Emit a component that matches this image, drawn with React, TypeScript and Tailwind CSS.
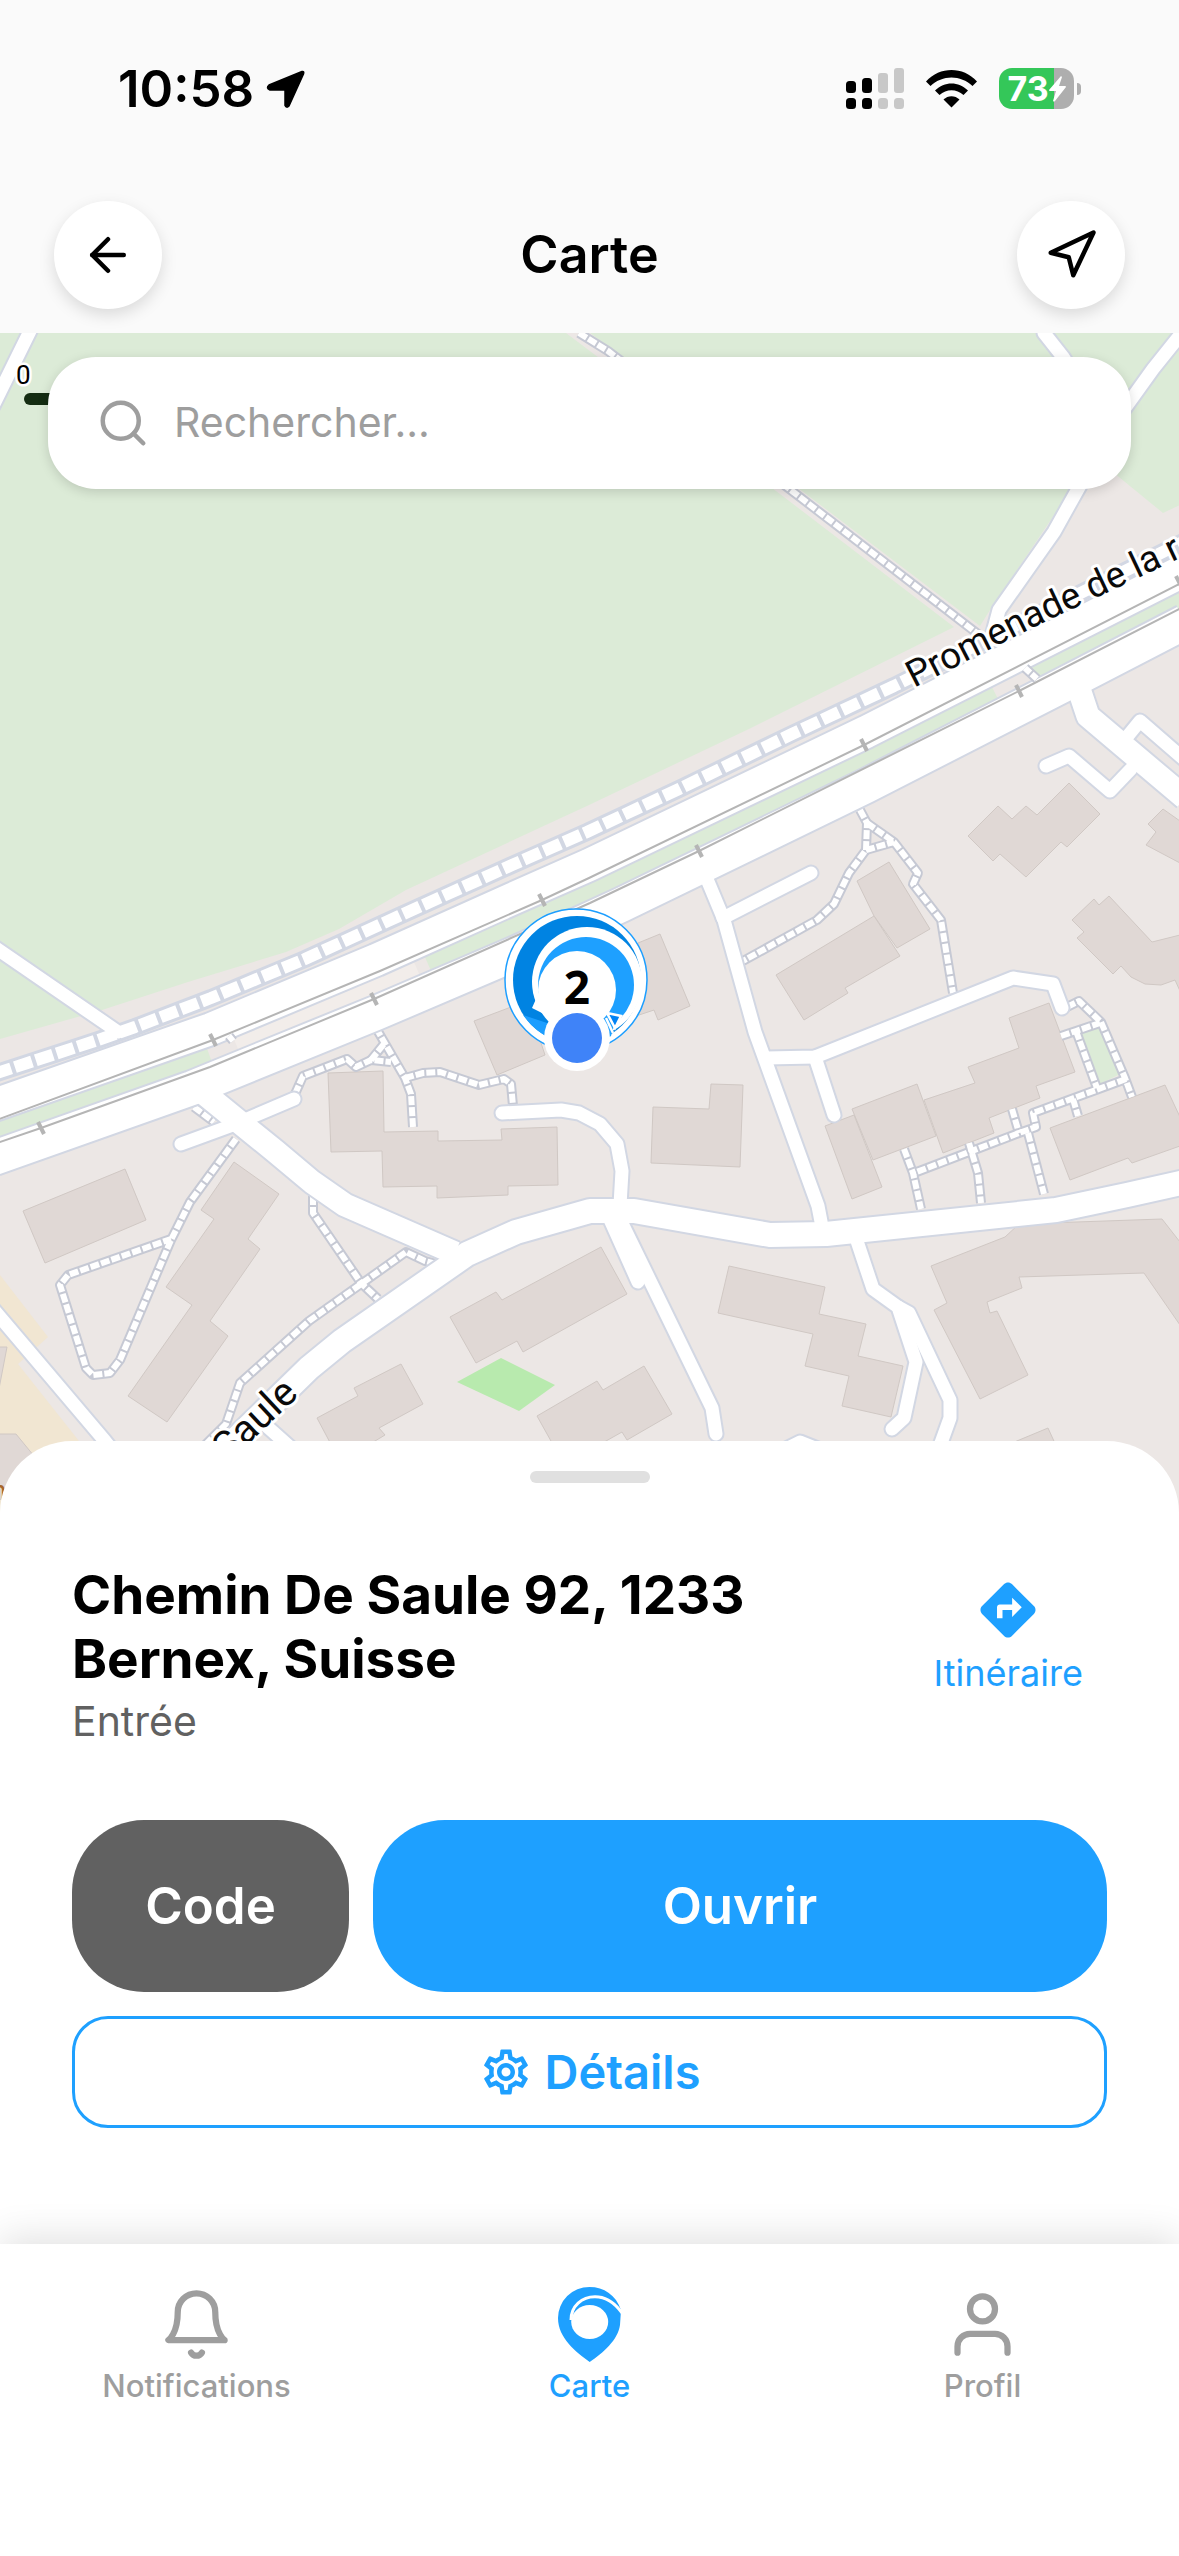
import { useState } from "react";
import { ArrowLeft, Navigation, Search } from "lucide-react";
import { FiBell, FiUser } from "react-icons/fi";
import { MdDirections, MdOutlineSettings } from "react-icons/md";

/* ---------- Map data ---------- */
const buildings = [
  "23,1211 125,1169 146,1220 45,1263",
  "234,1162 279,1194 248,1239 260,1249 210,1321 228,1336 167,1422 128,1396 192,1305 166,1287 214,1219 201,1210",
  "328,1073 383,1071 384,1132 438,1131 438,1141 502,1140 501,1129 557,1127 558,1185 508,1186 508,1195 437,1198 437,1186 383,1187 382,1151 331,1152",
  "474,1021 527,1001 545,1055 497,1075",
  "638,943 660,934 690,1006 658,1020 654,1010 627,1019",
  "711,1084 743,1085 740,1167 651,1163 653,1107 709,1109",
  "857,881 889,862 930,929 897,948 874,916",
  "874,916 900,956 845,988 848,993 804,1020 776,975",
  "1069,783 1100,814 1067,847 1061,842 1026,877 1000,854 993,861 968,836 998,806 1012,819 1026,806 1037,815",
  "1163,809 1180,821 1180,863 1146,845 1156,832 1148,824",
  "1094,899 1099,905 1109,896 1152,942 1180,935 1180,991 1175,980 1161,985 1145,984 1131,977 1121,966 1113,974 1077,938 1084,932 1072,920",
  "1009,1018 1049,1003 1075,1072 1036,1086 1040,1098 989,1118 994,1133 943,1153 924,1100 975,1083 968,1067 1019,1048",
  "852,1109 917,1084 936,1136 873,1160",
  "825,1126 854,1115 882,1187 852,1199",
  "1050,1128 1165,1085 1180,1117 1180,1146 1132,1163 1128,1158 1070,1180",
  "729,1266 825,1287 819,1314 866,1324 858,1356 903,1366 891,1417 842,1406 849,1376 805,1366 813,1334 718,1313",
  "931,1266 1005,1237 1019,1224 1162,1219 1180,1242 1180,1325 1144,1273 1019,1277 1022,1288 987,1302 990,1313 997,1311 1028,1375 980,1399 934,1310 947,1303",
  "450,1317 496,1292 502,1300 601,1247 627,1294 523,1352 517,1341 476,1363",
  "317,1418 358,1396 354,1388 401,1364 423,1404 379,1428 385,1435 360,1450 334,1450",
  "537,1416 597,1381 603,1390 644,1366 672,1414 627,1440 622,1432 590,1450 556,1450",
  "1000,1448 1048,1428 1058,1450",
  "-2,1347 7,1347 -2,1394",
  "-2,1434 16,1434 34,1456 0,1500",
];

const footpaths = [
  "M579 333 608 351 792 491 978 634",
  "M860 810 867 823 866 850 849 873 834 904 817 920 743 961",
  "M867 823 894 842 918 873 913 884 941 920 953 993",
  "M866 850 894 842",
  "M376 1028 405 1078 411 1094 413 1127",
  "M295 1094 303 1076 347 1059 356 1067 371 1060 391 1062",
  "M371 1060 384 1044",
  "M405 1078 423 1073 440 1072 479 1085 504 1079 511 1084 513 1106",
  "M236 1139 190 1202 171 1240 120 1360 110 1373 93 1375 86 1368 60 1285 68 1275 171 1239",
  "M313 1196 313 1213 361 1283 378 1299",
  "M436 1264 425 1261 406 1252 309 1321 240 1383 226 1424 200 1450",
  "M194 1107 214 1122",
  "M1067 1007 1079 1001 1101 1022 1125 1078 1132 1097",
  "M1061 1036 1076 1031 1100 1023",
  "M1076 1031 1097 1088",
  "M1126 1079 1033 1113 1036 1127 1019 1133 914 1173",
  "M1073 1099 1078 1116",
  "M1012 1109 1019 1133",
  "M1028 1133 1044 1194",
  "M969 1143 972 1153 978 1173 981 1203",
  "M904 1149 913 1173 921 1209",
];

const streets = [
  "M31 329 0 392 -8 408",
  "M1044 333 1063 357 1090 400",
  "M1185 329 1153 369 1120 415 1078 489 1054 532 999 610 991 640",
  "M-10 944 118 1032",
  "M181 1144 233 1125 294 1099",
  "M502 1113 561 1110 579 1113 600 1124 617 1144 622 1171 620 1205",
  "M704 872 724 920 755 1032 818 1206 823 1232",
  "M723 918 811 873",
  "M766 1058 815 1057 1013 978 1053 984 1062 1008",
  "M815 1057 834 1115",
  "M608 1215 638 1282",
  "M618 1215 712 1408 716 1434",
  "M854 1232 873 1289 898 1307 916 1362 904 1418 892 1429",
  "M898 1307 909 1313 950 1400 950 1418 941 1443 930 1465",
  "M780 1452 800 1442 840 1458",
  "M262 1422 300 1456",
  "M-6 1310 105 1441 128 1470",
  "M1122 743 1140 721 1185 760",
  "M1046 766 1069 756 1110 791 1131 769",
];

const avenues = [
  "M200 1090 238 1121 275 1151 312 1182 345 1205 455 1253",
  "M1076 680 1088 716 1185 798",
];

const mainStreet =
  "M180 1492 226 1449 309 1368 342 1341 467 1254 516 1232 590 1211 634 1211 770 1235 826 1234 1056 1210 1127 1195 1185 1182";

const promenade =
  "M-6 1074 98 1040 135 1027 211 998 305 959 399 916 512 865 587 832 679 789 792 734 894 686 1185 541";
const upperLane =
  "M-6 1105 211 1029 376 960 512 899 589 865 866 732 1185 570";
const lowerLane =
  "M-6 1158 192 1088 376 1013 512 955 621 905 866 786 1067 683 1185 622";

const railTicks = [
  [213, 1040],
  [542, 900],
  [864, 745],
  [41, 1128],
  [374, 999],
  [699, 851],
  [1019, 691],
  [1179, 582],
];

function MapView() {
  return (
    <svg
      className="absolute inset-0 h-full w-full bg-[#ece7e5]"
      viewBox="0 333 1179 1911"
      preserveAspectRatio="xMidYMin slice"
      role="img"
      aria-label="Plan du quartier"
    >
      {/* fields and plots */}
      <g fill="#dcebd7">
        <path d="M0 333H566L780 494 954 627 751 728 589 805 406 890 339 929 286 952 188 982 102 1010 0 1039Z" />
        <path d="M590 333 802 491 980 626 990 610 1044 530 1073 487 1090 452 1114 473 1163 513 1180 505V333Z" />
        <path d="M1081 1033 1099 1027 1120 1074 1100 1084Z" />
      </g>
      <path d="M457 1382 501 1358 555 1385 519 1411Z" fill="#b8eaae" />
      <path d="M0 1275 48 1337 18 1364 79 1441 90 1540H0Z" fill="#f1e6d2" />

      {/* central reservation */}
      <g fill="none" strokeWidth="24">
        <path d="M-6 1132 209 1054" stroke="#dcebd7" />
        <path d="M236 1044 376 987 417 969" stroke="#f2edea" />
        <path d="M428 964 512 927 589 893 866 759 995 693" stroke="#dcebd7" />
        <path d="M1034 672 1067 656 1185 596" stroke="#dcebd7" />
      </g>

      <g fill="#e0d8d5" stroke="#d0c8c4" strokeWidth="1">
        {buildings.map((points) => (
          <polygon key={points} points={points} />
        ))}
      </g>

      {/* footpaths */}
      <g fill="none" strokeLinejoin="round">
        <g stroke="#c6c9d4" strokeWidth="10">
          {footpaths.map((d) => (
            <path key={d} d={d} />
          ))}
        </g>
        <path d="M237 1134 305 1186" stroke="#c6c9d4" strokeWidth="5" />
        <g stroke="#fff" strokeWidth="6" strokeDasharray="9 2">
          {footpaths.map((d) => (
            <path key={d} d={d} />
          ))}
        </g>
      </g>

      {/* roads, casing first */}
      <g fill="none" strokeLinejoin="round">
        <g stroke="#d2d7e3">
          <path d={promenade} strokeWidth="18" />
          <g strokeWidth="17" strokeLinecap="round">
            {streets.map((d) => (
              <path key={d} d={d} />
            ))}
          </g>
          {avenues.map((d) => (
            <path key={d} d={d} strokeWidth="27" />
          ))}
          <path d={mainStreet} strokeWidth="28" />
          <path d={upperLane} strokeWidth="36" />
          <path d={lowerLane} strokeWidth="38" />
        </g>
        <g stroke="#fff">
          <path d={promenade} strokeWidth="12" strokeDasharray="18 4" />
          <g strokeWidth="13" strokeLinecap="round">
            {streets.map((d) => (
              <path key={d} d={d} />
            ))}
          </g>
          {avenues.map((d) => (
            <path key={d} d={d} strokeWidth="23" />
          ))}
          <path d={mainStreet} strokeWidth="24" />
          <path d={upperLane} strokeWidth="32" />
          <path d={lowerLane} strokeWidth="34" />
        </g>
      </g>

      {/* crossing between the two lanes */}
      <g fill="none" strokeLinejoin="round">
        <path d="M1025 668 1037 679M229 1036 233 1041" stroke="#c6c9d4" strokeWidth="10" />
        <path d="M1025 668 1037 679M229 1036 233 1041" stroke="#fff" strokeWidth="6" strokeDasharray="7 2" />
      </g>

      {/* tram tracks */}
      <g fill="none" stroke="#b5b5b5" strokeWidth="2">
        <path d="M-6 1121 213 1040 380 971 542 900 589 878 864 745 1185 581" />
        <path d="M-6 1144 41 1128 210 1067 374 999 590 903 699 851 1019 691 1185 606" />
        {railTicks.map(([x, y]) => (
          <path key={x} d={`M${x - 3} ${y - 6}l6 12`} strokeWidth="4" />
        ))}
      </g>

      {/* street names */}
      <defs>
        <path id="promenade-label" d="M914 688 1030 629 1240 530" />
        <path id="saule-label" d="M228 1463 302 1393 340 1357" />
      </defs>
      <g
        className="font-[Roboto,sans-serif]"
        fill="#0a0a0a"
        stroke="#fff"
        strokeWidth="6"
        strokeLinejoin="round"
        paintOrder="stroke"
      >
        <text fontSize="37">
          <textPath href="#promenade-label">Promenade de la r</textPath>
        </text>
        <text fontSize="40">
          <textPath href="#saule-label">Saule</textPath>
        </text>
      </g>
      <text x="-9" y="1500" fontSize="28" fill="#a8672a" className="font-[Roboto,sans-serif]">
        n
      </text>

      {/* scale bar */}
      <rect x="24" y="393" width="120" height="12" rx="6" fill="#142c12" />
      <text
        x="16"
        y="384"
        fontSize="26"
        stroke="#fff"
        strokeWidth="5"
        paintOrder="stroke"
        className="font-[Roboto,sans-serif]"
      >
        0
      </text>

      <ClusterMarker />
    </svg>
  );
}

function ClusterMarker() {
  return (
    <g>
      <circle cx="576" cy="980" r="71" fill="#fff" stroke="#1c9eff" strokeWidth="1.5" />
      <circle cx="577" cy="980" r="64" fill="#0083e2" />
      <path d="M523 1015Q535 1032 552 1039L562 1028Z" fill="#1c9eff" />
      <circle cx="587" cy="982" r="55" fill="#fff" />
      <circle cx="586" cy="985" r="48" fill="#1ea0ff" />
      <path d="M602 1020 618 1012 611 1036 605 1040Z" fill="#1ea0ff" />
      <circle cx="577" cy="990" r="39" fill="#fff" />
      <path d="M540 990Q538 1003 544 1014L532 1008Z" fill="#fff" />
      <path d="M607 1013 621 1016 615 1028Z" fill="#0083f5" stroke="#fff" strokeWidth="2.5" />
      <path d="M606 1018 613 1033" stroke="#fff" strokeWidth="2.5" />
      <text
        x="577"
        y="1004"
        textAnchor="middle"
        fontSize="46"
        className="font-['Noto_Sans',sans-serif] font-bold"
      >
        2
      </text>
      <circle cx="577" cy="1038" r="33" fill="#fff" />
      <circle cx="577" cy="1038" r="25" fill="#3f83f8" />
    </g>
  );
}

/* ---------- Status bar ---------- */
function StatusBar() {
  return (
    <div className="flex h-[177px] items-center justify-between pr-[98px] pl-[118px]">
      <div className="flex items-center gap-3">
        <span className="text-[51px] leading-none font-semibold">10:58</span>
        <svg width="40" height="40" viewBox="0 0 40 40" aria-hidden="true">
          <path
            d="M3 16 36 2.500Q38.500 2 37.500 5L23 37Q20.500 39.500 19 36.500V21H4Q-.5 19 3 16Z"
            stroke="#000"
            strokeWidth="1.500"
            strokeLinejoin="round"
          />
        </svg>
      </div>

      <div className="flex items-center gap-[22px]">
        <svg width="58" height="42" viewBox="0 0 58 42" aria-hidden="true">
          <rect y="13" width="10" height="12" rx="3.500" />
          <rect x="16" y="10" width="10" height="15" rx="3.500" />
          <rect y="30" width="10" height="11" rx="3.500" />
          <rect x="16" y="30" width="10" height="11" rx="3.500" />
          <g fill="#c8c8c8">
            <rect x="32" y="5" width="10" height="20" rx="3" />
            <rect x="48" width="10" height="25" rx="3" />
            <rect x="32" y="30" width="10" height="11" rx="3.500" />
            <rect x="48" y="30" width="10" height="11" rx="3.500" />
          </g>
        </svg>
        <svg width="51" height="38" viewBox="0 0 51 38" aria-hidden="true">
          <path d="M0 11.500C14-3.800 37-3.800 51 11.500L46.500 16C34.500 4.500 16.500 4.500 4.500 16Z" />
          <path d="M9 20.500C18.500 11 32.500 11 42 20.500L37.500 25C30.500 18.500 20.500 18.500 13.500 25Z" />
          <path d="M17.500 29.500C22 25 29 25 33.500 29.500L25.500 37.500Z" />
        </svg>
        <div className="flex items-center gap-[3px]">
          <div className="flex h-[41px] w-[75px] items-center justify-center rounded-[13px] bg-linear-to-r from-[#34c759] from-73% to-[#aeaeae] to-73% text-white">
            <span className="text-[34px] leading-none font-bold">73</span>
            <svg width="17" height="26" viewBox="0 0 17 26" fill="#fff" aria-hidden="true">
              <path d="M12 0 0 14Q0 15 1 15H7L4 25Q5 26 6 25L17 11Q17 10 16 10H10L13 1Z" />
            </svg>
          </div>
          <div className="h-3 w-1 rounded-r-full bg-[#aeaeae]" />
        </div>
      </div>
    </div>
  );
}

const roundButton =
  "flex size-[108px] items-center justify-center rounded-full bg-white shadow-[0_6px_16px_rgba(0,0,0,0.13)]";

function Header() {
  return (
    <header className="bg-[#fafafa]">
      <StatusBar />
      <div className="flex items-center justify-between px-[54px] pt-6 pb-6">
        <button type="button" aria-label="Retour" className={roundButton}>
          <ArrowLeft size={54} />
        </button>
        <h1 className="text-[52px] font-semibold">Carte</h1>
        <button type="button" aria-label="Ma position" className={roundButton}>
          <Navigation size={54} />
        </button>
      </div>
    </header>
  );
}

function PlaceSheet() {
  return (
    <section className="relative mt-auto flex flex-col rounded-t-[72px] bg-white px-[72px] pt-[30px] pb-[116px]">
      <div className="mx-auto h-3 w-[120px] rounded-full bg-[#e0e0e0]" />

      <div className="mt-20 flex items-start justify-between">
        <div className="max-w-[720px]">
          <h2 className="text-[53px] leading-16 font-bold">
            Chemin De Saule 92, 1233 Bernex, Suisse
          </h2>
          <p className="text-[41px] leading-15 text-[#616161]">Entrée</p>
        </div>
        <a href="#itineraire" className="mr-6 flex flex-col items-center text-[#1ea0ff]">
          <MdDirections size={66} className="mt-3.5" />
          <span className="text-[36px] leading-15">Itinéraire</span>
        </a>
      </div>

      <div className="mt-[69px] flex gap-6 text-[51px] font-semibold text-white">
        <button type="button" className="h-[172px] w-[277px] rounded-[72px] bg-[#616161]">
          Code
        </button>
        <button type="button" className="h-[172px] flex-1 rounded-[72px] bg-[#1ea0ff]">
          Ouvrir
        </button>
      </div>
      <button
        type="button"
        className="mt-6 flex h-28 items-center justify-center gap-3 rounded-[36px] border-3 border-[#1ea0ff] text-[47px] font-semibold text-[#1ea0ff]"
      >
        <MdOutlineSettings size={54} />
        Détails
      </button>
    </section>
  );
}

function PinIcon() {
  return (
    <svg width="63" height="75" viewBox="0 0 63 75" aria-hidden="true">
      <path
        d="M31.700 75C18 65 0 51 0 31A31.500 31 0 0 1 31.500 0C46 0 58 8 63 23L62 38C60 53 45 66 31.700 75Z"
        fill="currentColor"
      />
      <path
        d="M13 33C13 19 24 9.700 37 9.700C49 9.700 57 16 64 26"
        fill="none"
        stroke="#fff"
        strokeWidth="3"
      />
      <ellipse cx="31.700" cy="35" rx="18.500" ry="17" fill="#fff" />
    </svg>
  );
}

const tabs = [
  { label: "Notifications", icon: <FiBell size={75} /> },
  { label: "Carte", icon: <PinIcon /> },
  { label: "Profil", icon: <FiUser size={75} /> },
];

function TabBar() {
  const [active, setActive] = useState("Carte");

  return (
    <nav className="relative z-10 grid h-[312px] grid-cols-3 items-start bg-white pt-[43px] shadow-[0_-6px_36px_rgba(0,0,0,0.12)]">
      {tabs.map(({ label, icon }) => (
        <button
          key={label}
          type="button"
          onClick={() => setActive(label)}
          className={`flex flex-col items-center gap-1 text-[31px] leading-10 font-medium ${
            active === label ? "text-[#1ea0ff]" : "text-[#9e9e9e]"
          }`}
        >
          {icon}
          {label}
        </button>
      ))}
    </nav>
  );
}

export default function App() {
  return (
    <div className="flex min-h-screen flex-col bg-white font-[Inter,sans-serif] text-black">
      <Header />
      <main className="relative flex flex-1 flex-col overflow-hidden">
        <MapView />
        <label className="relative mx-12 mt-6 flex h-[132px] items-center gap-6 rounded-[48px] bg-white px-12 text-[#9e9e9e] shadow-[0_3px_12px_rgba(0,0,0,0.15)]">
          <Search size={54} />
          <input
            type="search"
            aria-label="Rechercher"
            placeholder="Rechercher..."
            className="min-w-0 flex-1 bg-transparent text-[41px] text-black outline-none placeholder:text-[#9e9e9e]"
          />
        </label>
        <PlaceSheet />
      </main>
      <TabBar />
    </div>
  );
}
